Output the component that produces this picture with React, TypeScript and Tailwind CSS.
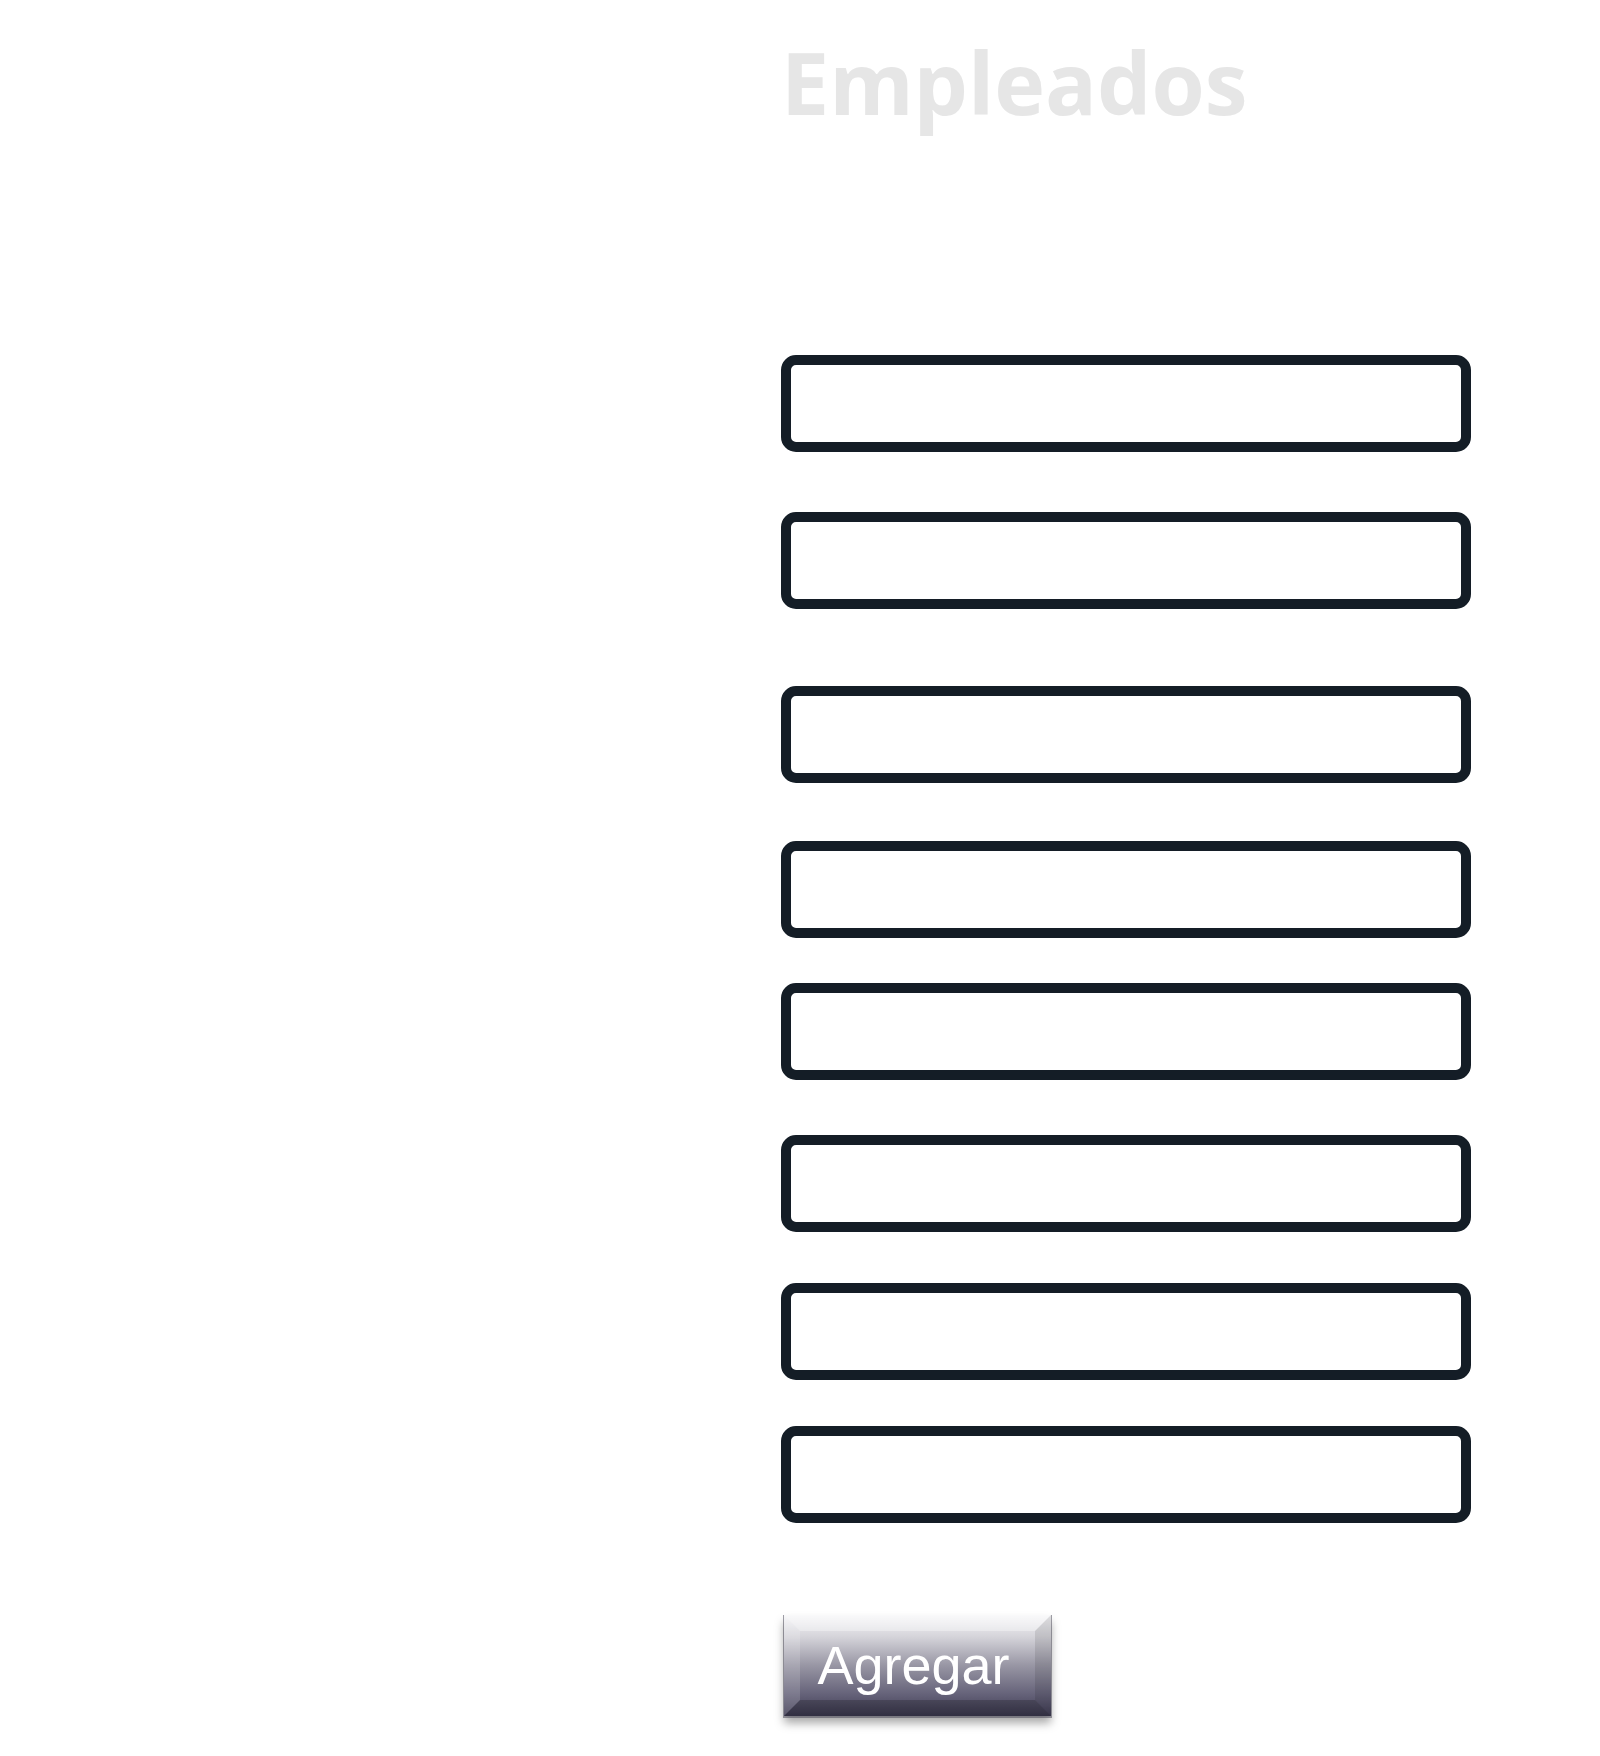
import React from "react";

const gaps = ["mt-0", "mt-[60px]", "mt-[77px]", "mt-[58px]", "mt-[45px]", "mt-[55px]", "mt-[51px]", "mt-[46px]"];

export default function App() {
  return (
    <div className="min-h-[1756px] w-full bg-white">
      <div className="ml-[781px] w-[690px] pt-[39px]">
        <h1 className="text-[86px] font-bold leading-none text-[#e6e6e6] [font-family:'Open_Sans',sans-serif]">
          Empleados
        </h1>
        <form className="mt-[230px] flex flex-col" onSubmit={(e) => e.preventDefault()}>
          {gaps.map((g, i) => (
            <input
              key={i}
              type="text"
              className={`${g} h-[97px] w-[690px] rounded-[15px] border-[10px] border-[#141d26] bg-white px-4 outline-none`}
            />
          ))}
          <div className="mt-[92px] ml-[3px]">
            <button
              type="submit"
              className="flex h-[101px] w-[267px] items-center justify-center border-[16px] border-t-white/35 border-l-white/15 border-r-black/10 border-b-black/20 bg-origin-border bg-[linear-gradient(to_bottom,#f7f7f9_0%,#d4d3d9_22%,#9896a4_50%,#66637a_78%,#3e3b52_100%)] pb-[2px] pr-[8px] text-[54px] leading-none text-white shadow-[0_1px_0_1px_rgba(80,78,92,0.55),0_7px_9px_rgba(0,0,0,0.35)] [font-family:'Liberation_Sans',Arial,sans-serif]"
            >
              Agregar
            </button>
          </div>
        </form>
      </div>
    </div>
  );
}
